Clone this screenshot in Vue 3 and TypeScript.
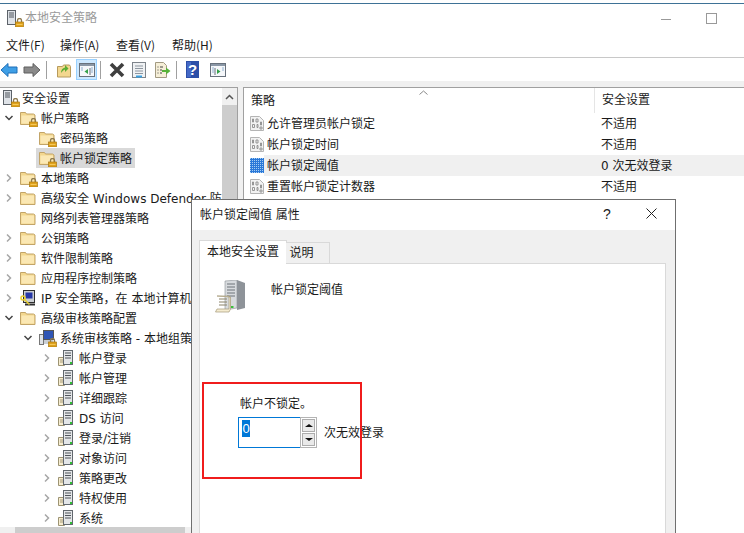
<script setup lang="ts">
type Row = { label: string; depth: number; arrow: '' | 'down' | 'right'; icon: string; selected?: boolean }

const menus: string[] = ['文件(F)', '操作(A)', '查看(V)', '帮助(H)']

const rows: Row[] = [
  { label: '帐户策略', depth: 0, arrow: 'down', icon: 'lock' },
  { label: '密码策略', depth: 1, arrow: '', icon: 'lock' },
  { label: '帐户锁定策略', depth: 1, arrow: '', icon: 'lock', selected: true },
  { label: '本地策略', depth: 0, arrow: 'right', icon: 'lock' },
  { label: '高级安全 Windows Defender 防火墙', depth: 0, arrow: 'right', icon: 'folder' },
  { label: '网络列表管理器策略', depth: 0, arrow: '', icon: 'folder' },
  { label: '公钥策略', depth: 0, arrow: 'right', icon: 'folder' },
  { label: '软件限制策略', depth: 0, arrow: 'right', icon: 'folder' },
  { label: '应用程序控制策略', depth: 0, arrow: 'right', icon: 'folder' },
  { label: 'IP 安全策略，在 本地计算机', depth: 0, arrow: 'right', icon: 'ip' },
  { label: '高级审核策略配置', depth: 0, arrow: 'down', icon: 'folder' },
  { label: '系统审核策略 - 本地组策略对象', depth: 1, arrow: 'down', icon: 'audit' },
  { label: '帐户登录', depth: 2, arrow: 'right', icon: 'sub' },
  { label: '帐户管理', depth: 2, arrow: 'right', icon: 'sub' },
  { label: '详细跟踪', depth: 2, arrow: 'right', icon: 'sub' },
  { label: 'DS 访问', depth: 2, arrow: 'right', icon: 'sub' },
  { label: '登录/注销', depth: 2, arrow: 'right', icon: 'sub' },
  { label: '对象访问', depth: 2, arrow: 'right', icon: 'sub' },
  { label: '策略更改', depth: 2, arrow: 'right', icon: 'sub' },
  { label: '特权使用', depth: 2, arrow: 'right', icon: 'sub' },
  { label: '系统', depth: 2, arrow: 'right', icon: 'sub' },
]

const policies = [
  { name: '允许管理员帐户锁定', value: '不适用', active: false },
  { name: '帐户锁定时间', value: '不适用', active: false },
  { name: '帐户锁定阈值', value: '0 次无效登录', active: true },
  { name: '重置帐户锁定计数器', value: '不适用', active: false },
]
</script>

<template>
  <div class="app">
    <svg class="defs" width="0" height="0">
      <defs>
        <symbol id="folder" viewBox="0 0 16 16">
          <path d="M.5 14.500V2.500h5l1 1.500h7l1.500 1v9.500z" fill="#f3d78f" stroke="#c2a468" />
          <path d="M1.500 5.500h12.500v8H1.500z" fill="#fbe8b4" />
        </symbol>
        <symbol id="padlock" viewBox="0 0 9 9">
          <path d="M2.500 4V2.500a2 2 0 0 1 4 0V4" fill="none" stroke="#8d7a50" stroke-width="1.300" />
          <rect x=".5" y="4" width="8" height="5" fill="#dfa11d" stroke="#a97812" stroke-width=".7" />
          <path d="M1.500 6.500h6" stroke="#f3c95a" />
        </symbol>
        <symbol id="server" viewBox="0 0 16 16">
          <rect x="1.500" y=".5" width="8" height="14" fill="#dfe3e8" stroke="#5c6269" />
          <path d="M3 3h5M3 5h5M3 7h5" stroke="#4f555c" />
        </symbol>
        <symbol id="doc" viewBox="0 0 14 15">
          <path d="M.5.5h9l4 4v10H.5z" fill="#f2f2f2" stroke="#b4b4b4" />
          <path d="M2.500 3h1v3h-1zM6 3h2v3H6zM2.500 8.500h2v3h-2zM7 8.500h1v3H7zM10.500 6h1v3h-1zM10 11h2v2h-2z" fill="none" stroke="#8c8c8c" stroke-width=".9" />
        </symbol>
      </defs>
    </svg>

    <header class="titlebar">
      <span class="title-icon">
        <svg class="ic16" viewBox="0 0 16 16"><use href="#server" /></svg>
        <svg class="lock-badge" viewBox="0 0 9 9"><use href="#padlock" /></svg>
      </span>
      <span class="title-text">本地安全策略</span>
      <span class="win-min"></span>
      <span class="win-max"></span>
    </header>

    <nav class="menubar">
      <span v-for="m in menus" :key="m" class="menu">{{ m }}</span>
    </nav>

    <div class="toolbar">
      <span class="tool t-back">
        <svg width="18" height="16" viewBox="0 0 18 16"><path d="M1 8l7-6.500V5h9v6H8v3.500z" fill="#3f9fe6" stroke="#1f6fb8" /></svg>
      </span>
      <span class="tool t-fwd">
        <svg width="18" height="16" viewBox="0 0 18 16"><path d="M17 8l-7-6.500V5H1v6h9v3.500z" fill="#8a8a8a" stroke="#5e5e5e" /></svg>
      </span>
      <i class="sep sep-a"></i>
      <span class="tool t-up">
        <svg width="16" height="16" viewBox="0 0 16 16">
          <path d="M1.500 15V4.500h5l1-1.500h6l1 1.500V15z" fill="#f3d78f" stroke="#b79a5c" />
          <path d="M5 11c0-3 1.500-5 4-5.500V3l3.500 3.500L9 10V7.500C7.500 8 6.500 9 5 11z" fill="#5cae32" />
        </svg>
      </span>
      <span class="tool t-tree">
        <svg width="16" height="16" viewBox="0 0 16 16">
          <rect x=".5" y="1.500" width="15" height="13" fill="#f5f7fa" stroke="#68717c" />
          <path d="M1 2h14v2H1z" fill="#8a97a6" />
          <path d="M11 6v7" stroke="#68717c" />
          <path d="M9 7v5L5.500 9.500z" fill="#35a14a" />
          <path d="M2 6h2M2 8h2M12 6h2M12 8h2M12 10h2" stroke="#8fb0d0" />
        </svg>
      </span>
      <i class="sep sep-b"></i>
      <span class="tool t-x">
        <svg width="16" height="16" viewBox="0 0 16 16"><path d="M2 2l12 12M14 2L2 14" stroke="#3f3f3f" stroke-width="3.600" /></svg>
      </span>
      <span class="tool t-props">
        <svg width="16" height="16" viewBox="0 0 16 16">
          <rect x="1.500" y=".5" width="13" height="15" fill="#f0f2f4" stroke="#7f858c" />
          <path d="M4 4h8M4 6.500h8M4 9h8M4 11.500h8" stroke="#8d96a0" />
          <path d="M5 14.500h6" stroke="#3aa0e0" stroke-width="2" />
        </svg>
      </span>
      <span class="tool t-export">
        <svg width="17" height="16" viewBox="0 0 17 16">
          <path d="M1.500.5h8l3 3v12h-11z" fill="#f6efd8" stroke="#a29a82" />
          <path d="M3.500 5h1M3.500 8h1M3.500 11h1M6 5h3M6 8h2M6 11h2" stroke="#444" />
          <path d="M8 8h4V5.500L16.500 9 12 12.500V10H8z" fill="#58b23a" />
        </svg>
      </span>
      <i class="sep sep-c"></i>
      <span class="tool t-help">
        <svg width="13" height="17" viewBox="0 0 13 17"><rect width="13" height="17" fill="#2c4fa8" /><rect x="1" y="1" width="4" height="15" fill="#4468c6" /></svg>
        <b class="q">?</b>
      </span>
      <span class="tool t-action">
        <svg width="16" height="16" viewBox="0 0 16 16">
          <rect x=".5" y="1.500" width="15" height="13" fill="#f5f7fa" stroke="#68717c" />
          <path d="M1 2h14v2H1z" fill="#8a97a6" />
          <path d="M5 6v7" stroke="#68717c" />
          <path d="M7 7v5l3.500-2.500z" fill="#35a14a" />
          <path d="M2 6h2M2 8h2M2 10h2M12 6h2M12 8h2" stroke="#8fb0d0" />
        </svg>
      </span>
    </div>

    <main class="panes">
      <section class="tree-pane">
        <div class="tree">
          <div class="row root">
            <span class="node-icon">
              <svg class="ic16" viewBox="0 0 16 16"><use href="#server" /></svg>
              <svg class="lock-badge" viewBox="0 0 9 9"><use href="#padlock" /></svg>
            </span>
            <span class="row-label">安全设置</span>
          </div>
          <div v-for="r in rows" :key="r.label" class="row" :class="`depth-${r.depth}`">
            <span class="arrow">
              <svg v-if="r.arrow === 'down'" width="10" height="10" viewBox="0 0 10 10"><path d="M1.500 3l3.500 3.500L8.500 3" fill="none" stroke="#444" stroke-width="1.500" /></svg>
              <svg v-else-if="r.arrow === 'right'" width="10" height="10" viewBox="0 0 10 10"><path d="M3 1.500L6.500 5 3 8.500" fill="none" stroke="#a6a6a6" stroke-width="1.500" /></svg>
            </span>
            <span class="row-main" :class="{ selected: r.selected }">
              <span class="node-icon">
                <template v-if="r.icon === 'lock'">
                  <svg class="ic16" viewBox="0 0 16 16"><use href="#folder" /></svg>
                  <svg class="lock-badge" viewBox="0 0 9 9"><use href="#padlock" /></svg>
                </template>
                <svg v-else-if="r.icon === 'folder'" class="ic16" viewBox="0 0 16 16"><use href="#folder" /></svg>
                <svg v-else-if="r.icon === 'ip'" class="ic16" viewBox="0 0 16 16">
                  <rect x="3.500" y=".5" width="11" height="12" fill="#c9cdd2" stroke="#2f2f2f" />
                  <rect x="5.500" y="2.500" width="7" height="6" fill="#2738a8" />
                  <path d="M5 14.500h10" stroke="#2f2f2f" stroke-width="2" />
                  <circle cx="3" cy="8" r="2" fill="none" stroke="#ead02e" stroke-width="1.500" />
                  <path d="M4.500 9.500l5 5" stroke="#ead02e" stroke-width="1.500" />
                </svg>
                <template v-else-if="r.icon === 'audit'">
                  <svg class="ic16" viewBox="0 0 16 16">
                    <rect x=".5" y="4.500" width="4" height="10" fill="#dfe3e8" stroke="#777" />
                    <rect x="4.500" y=".5" width="10" height="9" fill="#2f55b5" stroke="#555" />
                    <path d="M5 10h9v4H5z" fill="#c9ced4" />
                  </svg>
                  <svg class="lock-badge" viewBox="0 0 9 9"><use href="#padlock" /></svg>
                </template>
                <svg v-else class="ic16" viewBox="0 0 16 16">
                  <path d="M.5 7.500h6v8h-6z" fill="#f6ecd0" stroke="#9c9372" />
                  <rect x="5.500" y=".5" width="9" height="14" fill="#e4e6e8" stroke="#62686e" />
                  <path d="M7 3h6M7 5.500h6M7 8h6" stroke="#4f545a" />
                  <path d="M2 10h3M2 12h3" stroke="#a59a78" />
                  <rect x="12" y="12" width="2" height="2" fill="#2fc034" />
                </svg>
              </span>
              <span class="row-label">{{ r.label }}</span>
            </span>
          </div>
        </div>
        <div class="vscroll">
          <span class="scroll-up">
            <svg width="9" height="6" viewBox="0 0 9 6"><path d="M1 5l3.500-3.500L8 5" fill="none" stroke="#555" stroke-width="1.500" /></svg>
          </span>
          <span class="scroll-thumb"></span>
        </div>
        <div class="hscroll"><span class="hscroll-thumb"></span></div>
      </section>

      <section class="list-pane">
        <div class="list-head">
          <span class="col-name">策略</span>
          <svg class="sort" width="9" height="5" viewBox="0 0 9 5"><path d="M.5 4.500L4.500 1l4 3.500" fill="none" stroke="#888" /></svg>
          <span class="col-value">安全设置</span>
        </div>
        <div v-for="p in policies" :key="p.name" class="list-row">
          <span class="doc-icon">
            <svg v-if="!p.active" width="14" height="15" viewBox="0 0 14 15"><use href="#doc" /></svg>
            <svg v-else width="14" height="15" viewBox="0 0 14 15">
              <defs>
                <pattern id="dots" width="2" height="2" patternUnits="userSpaceOnUse">
                  <rect width="2" height="2" fill="#2a78d8" />
                  <rect width="1" height="1" fill="#a6cdf2" />
                </pattern>
              </defs>
              <rect width="14" height="15" fill="url(#dots)" />
            </svg>
          </span>
          <span class="list-cells" :class="{ active: p.active }">
            <span class="cell-name">{{ p.name }}</span>
            <span class="cell-value">{{ p.value }}</span>
          </span>
        </div>
      </section>
    </main>

    <section class="dialog">
      <div class="dlg-title">
        <span class="dlg-title-text">帐户锁定阈值 属性</span>
        <span class="dlg-help">?</span>
        <svg class="dlg-close" width="11" height="11" viewBox="0 0 11 11"><path d="M.5.5l10 10M10.500.5l-10 10" stroke="#222" /></svg>
      </div>
      <div class="dlg-body">
        <div class="tabs">
          <span class="tab tab-on">本地安全设置</span>
          <span class="tab tab-off">说明</span>
        </div>
        <div class="tab-panel">
          <div class="policy-head">
            <svg class="big-icon" width="32" height="34" viewBox="0 0 32 34">
              <path d="M10 1l12-1v28l-12 2z" fill="#d8dbde" stroke="#8b9096" stroke-width=".6" />
              <path d="M22 0l8 3v25l-8 2z" fill="#8e9399" />
              <path d="M12 4h8M12 7h8M12 10h8M12 13h8M12 16h8" stroke="#6d7278" />
              <rect x="16" y="26" width="2.500" height="2" fill="#3cbf3c" />
              <path d="M2 16h12v13H2l-1.500 3H14l1.500-3V17z" fill="#f5ecd0" stroke="#a59a78" stroke-width=".7" />
              <path d="M4 19h8M4 22h8M4 25h8" stroke="#8a8268" />
            </svg>
            <span class="policy-name">帐户锁定阈值</span>
          </div>
          <p class="hint">帐户不锁定。</p>
          <div class="spin-line">
            <div class="spin">
              <div class="spin-input"><span class="sel">0</span></div>
              <div class="spin-btns">
                <span class="spin-btn"><i class="tri-up"></i></span>
                <span class="spin-btn"><i class="tri-down"></i></span>
              </div>
            </div>
            <span class="spin-unit">次无效登录</span>
          </div>
        </div>
      </div>
    </section>

    <div class="red-box"></div>
  </div>
</template>

<style>
html, body { margin: 0; padding: 0; background: #fff; }
</style>

<style scoped>
.app {
  position: relative;
  width: 744px;
  height: 533px;
  overflow: hidden;
  background: #fff;
  display: flex;
  flex-direction: column;
  font-family: "DejaVu Sans", "Noto Sans CJK SC", sans-serif;
  font-size: 12px;
  line-height: 20px;
  color: #1a1a1a;
}
.defs { position: absolute; }
.titlebar {
  margin-top: 3px;
  border-top: 1px solid #3e7296;
  display: flex;
  align-items: center;
  padding: 0 27px 3px 6px;
  box-sizing: border-box;
  height: 32px;
}
.title-icon { position: relative; width: 16px; height: 16px; }
.ic16 { display: block; width: 16px; height: 16px; }
.lock-badge { position: absolute; right: -2px; bottom: -1px; width: 9px; height: 9px; }
.title-text { margin-left: 3px; color: #9a9a9a; flex: 1; }
.win-min { width: 10px; height: 1px; background: #999; margin: 3px 35px 0 0; }
.win-max { width: 9px; height: 9px; border: 1px solid #999; }
.menubar {
  height: 22px;
  display: flex;
  align-items: center;
  padding: 0 0 2px 6px;
  box-sizing: border-box;
  gap: 16px;
  font-family: "Noto Sans CJK SC", sans-serif;
}
.menu { width: 40px; white-space: nowrap; }
.menu:first-child { width: 38px; }
.toolbar {
  height: 23px;
  border-top: 1px solid #c8c8c8;
  border-bottom: 1px solid #f0f0f0;
  display: flex;
  align-items: center;
  box-sizing: content-box;
}
.tool { display: flex; align-items: center; justify-content: center; position: relative; height: 21px; }
.t-back { width: 18px; margin-left: 0; }
.t-fwd { width: 18px; margin-left: 5px; }
.sep { width: 1px; height: 18px; background: #a0a0a0; }
.sep-a { margin-left: 5px; }
.t-up { width: 16px; margin-left: 9px; }
.t-tree { width: 21px; margin-left: 4px; background: #cce8ff; box-shadow: inset 0 0 0 1px #99d1ff; }
.sep-b { margin-left: 3px; }
.t-x { width: 16px; margin-left: 8px; }
.t-props { width: 16px; margin-left: 6px; }
.t-export { width: 17px; margin-left: 7px; }
.sep-c { margin-left: 5px; }
.t-help { width: 13px; margin-left: 9px; }
.q { position: absolute; color: #fff; font: bold 15px "Liberation Sans", sans-serif; }
.t-action { width: 16px; margin-left: 11px; }
.panes {
  flex: 1;
  min-height: 0;
  display: flex;
  gap: 5px;
  padding-top: 5px;
  background: #f0f0f0;
}
.tree-pane {
  position: relative;
  width: 238px;
  box-sizing: border-box;
  background: #fff;
  border: 1px solid #a0a0a0;
  border-width: 1px 1px 0 0;
  overflow: hidden;
  padding-right: 15px;
}
.tree { overflow: hidden; white-space: nowrap; height: 100%; }
.row { display: flex; align-items: center; height: 20px; }
.root { padding-left: 2px; }
.root .row-label { margin-left: 4px; }
.depth-1 { padding-left: 19px; }
.depth-2 { padding-left: 38px; }
.arrow { width: 17px; flex: none; display: flex; justify-content: center; align-items: center; }
.row-main { display: flex; align-items: center; height: 20px; padding: 0 3px; }
.selected { background: #d9d9d9; }
.node-icon { position: relative; width: 16px; height: 16px; flex: none; }
.row-label { margin-left: 5px; line-height: 22px; height: 20px; }
.vscroll {
  position: absolute;
  top: 0;
  right: 0;
  bottom: 6px;
  width: 15px;
  background: #f0f0f0;
  display: flex;
  flex-direction: column;
}
.scroll-up { height: 17px; display: flex; align-items: center; justify-content: center; }
.scroll-thumb { flex: 1; background: #cdcdcd; }
.hscroll {
  position: absolute;
  left: 0;
  right: 0;
  bottom: 0;
  height: 6px;
  background: #f0f0f0;
  padding-left: 15px;
}
.hscroll-thumb { display: block; height: 100%; width: 170px; background: #cdcdcd; }
.list-pane {
  flex: 1;
  background: #fff;
  border-top: 1px solid #a0a0a0;
  border-left: 1px solid #a0a0a0;
  position: relative;
  padding-left: 6px;
}
.list-head { height: 25px; display: flex; align-items: center; padding-left: 1px; position: relative; }
.col-name { width: 343px; }
.col-value { padding-left: 7px; height: 25px; line-height: 25px; border-left: 1px solid #e5e5e5; }
.sort { position: absolute; top: 2px; left: 169px; }
.list-row { display: flex; align-items: center; height: 21px; }
.doc-icon { width: 14px; flex: none; display: flex; align-items: center; }
.list-cells { flex: 1; display: flex; height: 21px; line-height: 23px; padding-left: 3px; }
.active { background: #f0f0f0; }
.cell-name { width: 334px; }
.dialog {
  position: absolute;
  left: 191px;
  top: 199px;
  width: 485px;
  height: 340px;
  box-sizing: border-box;
  border: 1px solid #6f6f6f;
  background: #f0f0f0;
  display: flex;
  flex-direction: column;
}
.dlg-title {
  height: 30px;
  flex: none;
  background: #fff;
  display: flex;
  align-items: center;
  box-sizing: border-box;
  padding: 0 0 0 8px;
  position: relative;
}
.dlg-title-text { flex: 1; }
.dlg-help { position: absolute; left: 411px; top: 4px; font-family: "Liberation Sans", sans-serif; font-size: 14px; }
.dlg-close { position: absolute; left: 454px; top: 8px; }
.dlg-body { flex: 1; padding: 10px 9px 0 7px; display: flex; flex-direction: column; }
.tabs { display: flex; height: 24px; align-items: flex-end; position: relative; z-index: 1; }
.tab { box-sizing: border-box; border: 1px solid #d9d9d9; text-align: center; }
.tab-on { width: 88px; height: 24px; background: #fff; border-bottom: 0; line-height: 23px; }
.tab-off { width: 44px; height: 22px; margin-left: -1px; border-left: 0; line-height: 21px; padding-right: 12px; background: #f0f0f0; }
.tab-panel { flex: 1; margin-top: -1px; background: #fff; border: 1px solid #d9d9d9; padding: 16px 0 0 15px; }
.policy-head { display: flex; align-items: flex-start; height: 100px; }
.big-icon { flex: none; }
.policy-name { margin: 1px 0 0 24px; line-height: 18px; }
.hint { margin: 14px 0 0 25px; height: 17px; line-height: 21px; }
.spin-line { display: flex; align-items: center; margin: 6px 0 0 23px; }
.spin { display: flex; height: 31px; width: 79px; }
.spin-input { box-sizing: border-box; width: 62px; height: 31px; border: 1px solid #0078d7; border-right: 0; padding: 2px 0 0 3px; }
.sel { display: block; width: 8px; height: 17px; line-height: 17px; background: #0078d7; color: #fff; text-align: center; font-family: "Liberation Sans", sans-serif; font-size: 13px; }
.spin-btns { box-sizing: border-box; width: 17px; height: 31px; border: 1px solid #b4b4b4; display: flex; flex-direction: column; background: #fff; padding: 1px; gap: 1px; }
.spin-btn { flex: 1; background: #e9e9e9; border: 1px solid #adadad; display: flex; align-items: center; justify-content: center; }
.tri-up { border: 3px solid transparent; border-top: 0; border-bottom: 3px solid #111; border-left-width: 4px; border-right-width: 4px; }
.tri-down { border: 3px solid transparent; border-bottom: 0; border-top: 3px solid #111; border-left-width: 4px; border-right-width: 4px; }
.spin-unit { margin: 1px 0 0 7px; }
.red-box {
  position: absolute;
  left: 202px;
  top: 382px;
  width: 160px;
  height: 97px;
  box-sizing: border-box;
  border: 2px solid #f01c1c;
}
</style>
